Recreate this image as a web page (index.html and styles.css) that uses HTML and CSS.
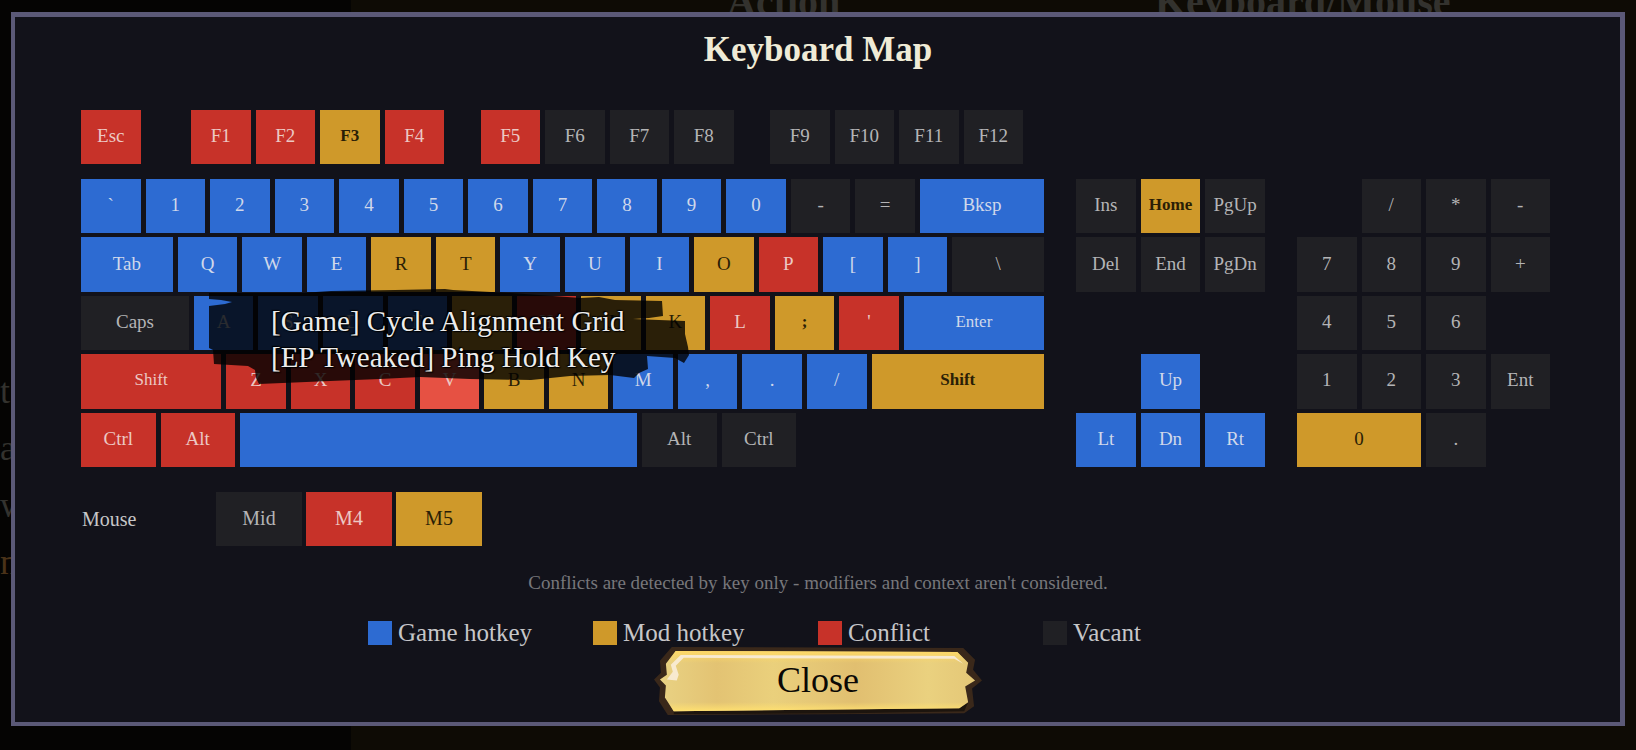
FILE: index.html
```html
<!DOCTYPE html>
<html lang="en">
<head>
<meta charset="utf-8">
<title>Keyboard Map</title>
<link rel="stylesheet" href="styles.css">
</head>
<body>
<div class="backdrop" aria-hidden="true">
  <div class="backdrop-panel"></div>
  <div class="backdrop-head"><span>Action</span><span>Keyboard/Mouse</span></div>
  <div class="backdrop-side"><span>t</span><span>a</span><span>w</span><span class="amber">n</span></div>
</div>
<main class="dialog">
  <h1 class="title">Keyboard Map</h1>

  <div class="board">
    <div class="main-block">
      <div class="row-f">
        <button class="key conflict">Esc</button><i></i>
        <button class="key conflict">F1</button><button class="key conflict">F2</button><button class="key mod strong">F3</button><button class="key conflict">F4</button><i></i>
        <button class="key conflict">F5</button><button class="key">F6</button><button class="key">F7</button><button class="key">F8</button><i></i>
        <button class="key">F9</button><button class="key">F10</button><button class="key">F11</button><button class="key">F12</button>
      </div>
      <div class="rows main-keys">
        <button class="key game">`</button><button class="key game">1</button><button class="key game">2</button><button class="key game">3</button><button class="key game">4</button><button class="key game">5</button><button class="key game">6</button><button class="key game">7</button><button class="key game">8</button><button class="key game">9</button><button class="key game">0</button><button class="key">-</button><button class="key">=</button><button class="key game u200">Bksp</button>

        <button class="key game u150">Tab</button><button class="key game">Q</button><button class="key game">W</button><button class="key game">E</button><button class="key mod">R</button><button class="key mod">T</button><button class="key game">Y</button><button class="key game">U</button><button class="key game">I</button><button class="key mod">O</button><button class="key conflict">P</button><button class="key game">[</button><button class="key game">]</button><button class="key u150">\</button>

        <button class="key u175">Caps</button><button class="key game">A</button><button class="key game">S</button><button class="key game">D</button><button class="key game">F</button><button class="key mod">G</button><button class="key conflict">H</button><button class="key mod">J</button><button class="key mod">K</button><button class="key conflict">L</button><button class="key mod strong">;</button><button class="key conflict">'</button><button class="key game small u225">Enter</button>

        <button class="key conflict small u225">Shift</button><button class="key conflict">Z</button><button class="key conflict">X</button><button class="key conflict">C</button><button class="key conflict active" aria-describedby="key-tip">V</button><button class="key mod">B</button><button class="key mod">N</button><button class="key game">M</button><button class="key game">,</button><button class="key game">.</button><button class="key game">/</button><button class="key mod small strong u275">Shift</button>

        <div class="row-space">
          <button class="key conflict">Ctrl</button><button class="key conflict">Alt</button><button class="key game" aria-label="Space"></button><button class="key">Alt</button><button class="key">Ctrl</button>
        </div>
      </div>

      <div class="tooltip" id="key-tip" role="tooltip">
        <svg class="brush" viewBox="0 0 480 97" aria-hidden="true">
          <path fill="#000" fill-opacity=".8" d="M0 4 L92 4 122 2 186 1 236 0 244 1 302 4 372 9 390 8 406 11 453 12 454 27 440 29 424 30 476 32 476 45 479 58 480 66 475 74 466 69 438 67 439 80 430 84 425 89 401 86 361 87 322 91 261 90 211 88 171 90 121 92 50 95 47 89 46 81 39 77 5 75 4 61 0 59 0 17 16 15 23 13 12 11 0 10Z"/>
        </svg>
        <div class="tip-text"><div>[Game] Cycle Alignment Grid</div><div>[EP Tweaked] Ping Hold Key</div></div>
      </div>
    </div>

    <div class="rows nav-keys">
      <button class="key">Ins</button><button class="key mod strong">Home</button><button class="key">PgUp</button>
      <button class="key">Del</button><button class="key">End</button><button class="key">PgDn</button>
      <button class="key game up">Up</button>
      <button class="key game low">Lt</button><button class="key game low">Dn</button><button class="key game low">Rt</button>
    </div>

    <div class="rows num-keys">
      <i></i><button class="key">/</button><button class="key">*</button><button class="key">-</button>
      <button class="key">7</button><button class="key">8</button><button class="key">9</button><button class="key">+</button>
      <button class="key">4</button><button class="key">5</button><button class="key">6</button><i></i>
      <button class="key">1</button><button class="key">2</button><button class="key">3</button><button class="key">Ent</button>
      <button class="key mod double">0</button><button class="key">.</button>
    </div>
  </div>

  <div class="mouse">
    <span class="mouse-label">Mouse</span>
    <button class="key">Mid</button><button class="key conflict">M4</button><button class="key mod">M5</button>
  </div>

  <p class="note">Conflicts are detected by key only - modifiers and context aren't considered.</p>

  <ul class="legend">
    <li><span class="swatch game"></span>Game hotkey</li>
    <li><span class="swatch mod"></span>Mod hotkey</li>
    <li><span class="swatch conflict"></span>Conflict</li>
    <li><span class="swatch"></span>Vacant</li>
  </ul>

  <button class="close">
    <svg class="plate" viewBox="0 0 332 69" aria-hidden="true">
      <defs>
        <linearGradient id="gold" x1="0" x2="1">
          <stop offset="0" stop-color="#e9d283"/><stop offset=".18" stop-color="#e3c373"/><stop offset=".36" stop-color="#ead07c"/><stop offset=".62" stop-color="#e1bf70"/><stop offset=".85" stop-color="#ead17f"/><stop offset="1" stop-color="#e4c777"/>
        </linearGradient>
        <linearGradient id="edge" x1="0" x2="0" y1="0" y2="1">
          <stop offset="0" stop-color="#ffd966"/><stop offset=".2" stop-color="#ffd966" stop-opacity="0"/><stop offset=".85" stop-color="#ffe070" stop-opacity="0"/><stop offset="1" stop-color="#ffe070"/>
        </linearGradient>
      </defs>
      <path fill="#3a281a" d="M18 0 313 1 325 13 323 23 332 34 322 42 324 60 314 67 172 68 14 69 5 55 6 41 0 33 7 26 6 14Z"/>
      <path fill="#1d150e" d="M20 65 309 62 318 56 314 65 200 67 20 68Z"/>
      <path fill="url(#gold)" d="M22 4 307 5 318 16 316 26 325 34 315 40 318 56 309 62 20 65 11 51 12 39 6 33 13 28 12 17Z"/>
      <path fill="url(#edge)" d="M22 4 307 5 318 16 316 26 325 34 315 40 318 56 309 62 20 65 11 51 12 39 6 33 13 28 12 17Z"/>
      <path fill="#f8ead0" d="M27 8 304 9 313 17 304 12 30 11 22 19 25 28 23 34 13 33 19 25 17 18Z"/>
    </svg>
    <span class="close-label">Close</span>
  </button>
</main>
</body>
</html>
```
FILE: styles.css
```css
* {
  box-sizing: border-box;
}

body {
  margin: 0;
  min-height: 100vh;
  background: #050403;
  font-family: "Liberation Serif", "Times New Roman", serif;
  color: #c6c6c8;
  overflow: hidden;
}

button {
  font: inherit;
  border: 0;
  padding: 0;
  cursor: pointer;
}

/* dimmed screen behind the dialog */
.backdrop {
  position: absolute;
  inset: 0;
  overflow: hidden;
  font-size: 40px;
  line-height: 40px;
  color: #33322e;
}

.backdrop-panel {
  position: absolute;
  inset: 0 0 0 351px;
  background: #0e0b05;
}

.backdrop-head span {
  position: absolute;
  top: -18px;
  left: 727px;
  font-weight: bold;
}

.backdrop-head span + span {
  left: 1155px;
}

.backdrop-side {
  position: absolute;
  top: 363px;
  left: 0;
  display: grid;
  font-size: 36px;
  line-height: 57px;
}

.backdrop-side .amber {
  color: #4a3218;
}

.dialog {
  position: relative;
  display: flex;
  flex-direction: column;
  margin: 12px 11px 0;
  padding: 10px 65px 7px 66px;
  border: solid #5b5977;
  border-width: 5px 5px 4px 4px;
  background: #12121a;
}

.title {
  margin: 0 0 38px;
  font-size: 35px;
  line-height: 45px;
  text-align: center;
  color: #efebd6;
}

.board {
  display: grid;
  grid-template-columns: 968fr 194fr 258fr;
  column-gap: 27px;
  align-items: end;
}

.main-block {
  position: relative;
  display: grid;
  gap: 15px;
}

.key {
  min-width: 0;
  margin-right: 5px;
  padding-bottom: 2px;
  background: #202024;
  color: #b4b4b6;
  font-size: 19px;
  line-height: 22px;
}

.small {
  font-size: 17px;
}

.game {
  background: #2d6bd2;
  color: #d0d8ea;
}

.mod {
  background: #cf992a;
  color: #2a1e06;
}

.strong {
  font-weight: bold;
  font-size: 17px;
}

.conflict {
  background: #c73229;
  color: #ecc8c4;
}

.active {
  background: #e65143;
}

.row-f {
  display: grid;
  grid-template-columns: 129fr 91fr repeat(4, 129fr) 63fr repeat(4, 129fr) 63fr repeat(4, 129fr) 42fr;
  height: 54px;
}

.rows {
  display: grid;
  grid-template-rows: repeat(5, 1fr);
  row-gap: 4px;
  height: 288px;
}

.main-keys {
  grid-template-columns: repeat(60, 1fr);
}

.main-keys > .key { grid-column: span 4; }
.main-keys > .u150 { grid-column: span 6; }
.main-keys > .u175 { grid-column: span 7; }
.main-keys > .u200 { grid-column: span 8; }
.main-keys > .u225 { grid-column: span 9; }
.main-keys > .u275 { grid-column: span 11; }

.row-space {
  grid-column: 1 / -1;
  display: grid;
  grid-template-columns: 159fr 159fr 804fr 159fr 159fr 496fr;
}

.nav-keys {
  grid-template-columns: repeat(3, 1fr);
}

.nav-keys .up {
  grid-area: 4 / 2;
}

.nav-keys .low {
  grid-row: 5;
}

.num-keys {
  grid-template-columns: repeat(4, 1fr);
}

.num-keys .double {
  grid-column: span 2;
}

.tooltip {
  position: absolute;
  top: 179px;
  left: 128px;
  width: 480px;
  pointer-events: none;
}

.brush {
  display: block;
  width: 100%;
}

.tip-text {
  position: absolute;
  top: 14px;
  left: 62px;
  font-size: 29px;
  line-height: 36px;
  white-space: nowrap;
  color: #ececec;
  text-shadow: 0 0 2px #000, 1px 1px 1px #000, -1px -1px 1px #000;
}

.mouse {
  display: flex;
  height: 54px;
  margin-top: 25px;
}

.mouse .key {
  width: 86px;
  margin-right: 4px;
  font-size: 20px;
}

.mouse-label {
  width: 135px;
  padding-left: 1px;
  font-size: 20px;
  line-height: 54px;
}

.note {
  margin: 25px 0 0;
  font-size: 19px;
  line-height: 24px;
  text-align: center;
  color: #77777b;
}

.legend {
  display: grid;
  grid-template-columns: repeat(4, 225px);
  justify-content: center;
  margin: 26px 0 0;
  padding: 0;
  list-style: none;
  font-size: 25px;
  line-height: 24px;
}

.legend li {
  display: flex;
  gap: 6px;
}

.swatch {
  width: 24px;
  height: 24px;
}

.swatch:not(.game, .mod, .conflict) {
  background: #202024;
}

.close {
  align-self: center;
  display: grid;
  place-items: center;
  margin-top: 2px;
  background: none;
  color: #0b0805;
  font-size: 36px;
  line-height: 40px;
}

.plate,
.close-label {
  grid-area: 1 / 1;
}

.plate {
  display: block;
  width: 328px;
}

.close-label {
  position: relative;
  padding-bottom: 3px;
}
```
